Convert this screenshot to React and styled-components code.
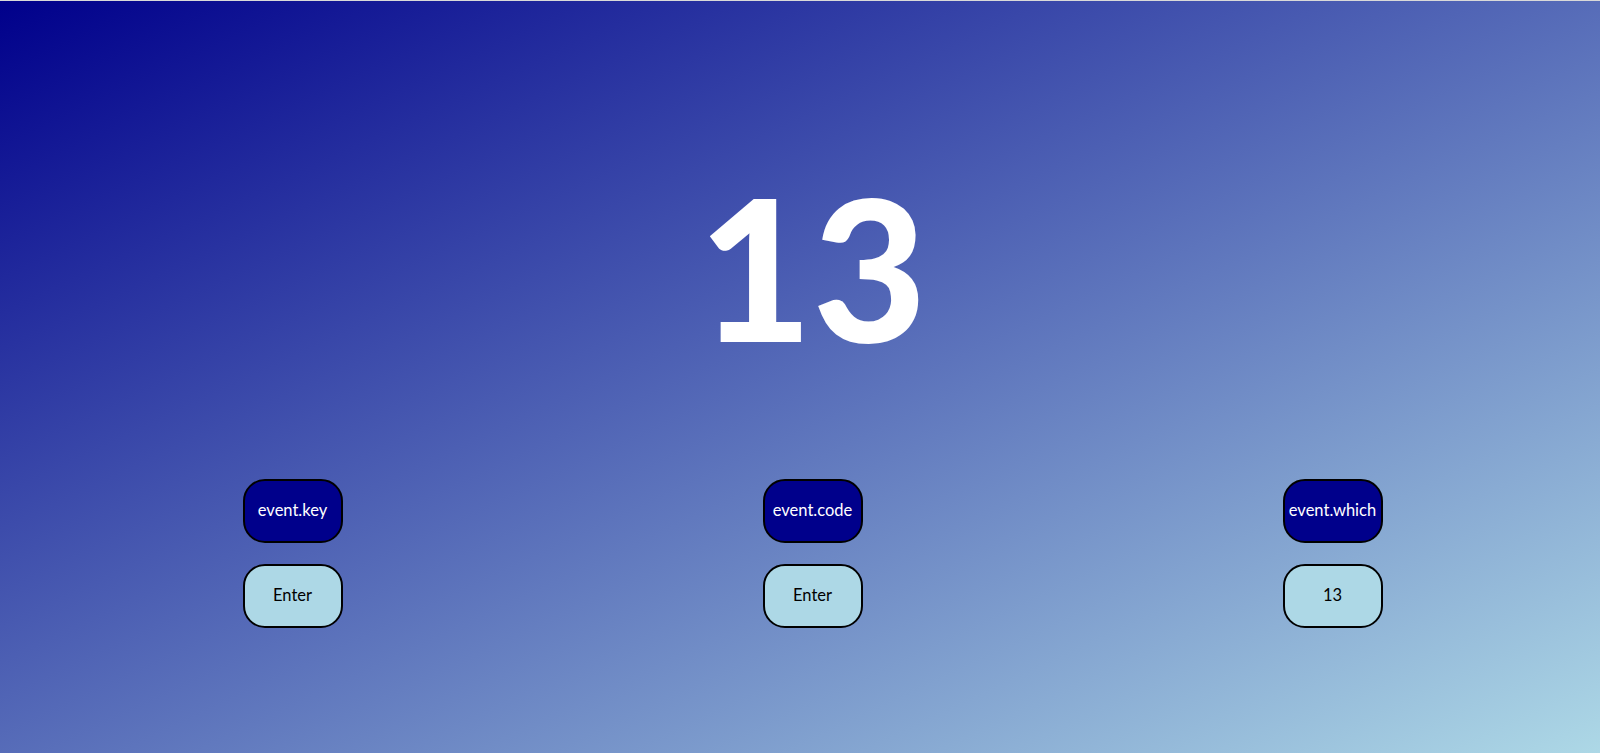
import React from 'react'
import styled, { createGlobalStyle } from 'styled-components'

const GlobalStyle = createGlobalStyle`
  html, body {
    margin: 0;
    padding: 0;
  }
  body {
    font-family: Lato, "Open Sans", sans-serif;
    border-top: 1px solid #d9d9d9;
  }
`

const Page = styled.div`
  height: 752px;
  background: linear-gradient(to bottom right, darkblue, lightblue);
  display: flex;
  flex-direction: column;
  align-items: center;
  padding-left: 25px;
  box-sizing: border-box;
  overflow: hidden;
`

const KeyCode = styled.div`
  margin-top: 167px;
  font-size: 197px;
  line-height: 1;
  font-weight: 900;
  color: white;
`

const Grid = styled.div`
  margin-top: 114px;
  display: grid;
  grid-template-columns: repeat(3, 520px);
  justify-content: center;
`

const Column = styled.div`
  display: flex;
  flex-direction: column;
  align-items: center;
  gap: 21px;
`

const Pill = styled.div`
  width: 100px;
  height: 64px;
  box-sizing: border-box;
  border: 2px solid black;
  border-radius: 22px;
  display: flex;
  align-items: center;
  justify-content: center;
  padding-bottom: 3px;
  font-size: 16.5px;
  white-space: nowrap;
  background: ${p => (p.$label ? 'darkblue' : 'lightblue')};
  color: ${p => (p.$label ? 'white' : 'black')};
`

const info = [
  { label: 'event.key', value: 'Enter' },
  { label: 'event.code', value: 'Enter' },
  { label: 'event.which', value: '13' },
]

export default function App() {
  return (
    <>
      <GlobalStyle />
      <Page>
        <KeyCode>13</KeyCode>
        <Grid>
          {info.map(i => (
            <Column key={i.label}>
              <Pill $label>{i.label}</Pill>
              <Pill>{i.value}</Pill>
            </Column>
          ))}
        </Grid>
      </Page>
    </>
  )
}
